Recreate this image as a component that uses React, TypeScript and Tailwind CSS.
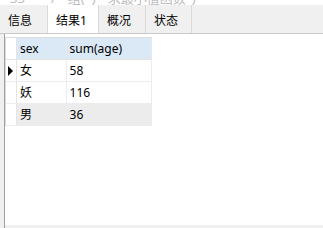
import React from 'react'

const font = { fontFamily: '"Noto Sans", "Noto Sans CJK SC", sans-serif' }

const tabs = [
  { label: '信息', w: 'w-[48px]', active: false },
  { label: '结果1', w: 'w-[51px]', active: true },
  { label: '概况', w: 'w-[47px]', active: false },
  { label: '状态', w: 'w-[46px]', active: false },
]

const rows = [
  { sex: '女', sum: '58', current: true, shade: false },
  { sex: '妖', sum: '116', current: false, shade: false },
  { sex: '男', sum: '36', current: false, shade: true },
]

export default function App() {
  return (
    <div className="w-[323px] h-[228px] bg-white overflow-hidden flex flex-col" style={font}>
      {/* 上方 SQL 编辑器, 只露出一点 */}
      <div className="h-[5px] overflow-hidden shrink-0">
        <div className="flex items-end h-[5px] text-[13px] leading-[16px] text-[#bdbdbd] whitespace-nowrap">
          <div className="-mb-[1px] flex">
            <span className="ml-[10px]">33</span>
            <span className="ml-[26px]">/</span>
            <span className="ml-[12px]">组(*)</span>
            <span className="ml-[12px]">求最小值函数</span>
            <span className="ml-[6px]">)</span>
          </div>
        </div>
      </div>

      {/* 标签页 */}
      <div className="flex h-[29px] shrink-0 bg-[#f0f0f0] border-b border-[#c9c9c9] text-[12px] text-black">
        {tabs.map((t) => (
          <div
            key={t.label}
            className={`${t.w} h-full flex items-center pl-[8px] pt-[3px] border-r border-[#d9d9d9] ${
              t.active ? 'bg-white -mb-px h-[29px]' : ''
            }`}
          >
            {t.label}
          </div>
        ))}
      </div>

      {/* 结果网格 */}
      <div className="flex flex-1 min-h-0">
        <div className="w-[4px] bg-[#f0f0f0]" />
        <div className="w-px bg-[#a0a0a0]" />
        <div className="flex-1 flex flex-col">
          <div className="flex-1 pt-[3px]">
            <div className="w-[147px] border-t border-l border-[#dcdcdc] text-[12px] text-black">
              <div className="flex h-[22px] border-b border-[#e4e4e4]">
                <div className="w-[11px] bg-white border-r border-[#e4e4e4]" />
                <div className="w-[50px] bg-[#dbe8f6] border-r border-[#e8e8e8] pl-[3px] flex items-center">sex</div>
                <div className="w-[86px] bg-[#dbe8f6] border-r border-[#e8e8e8] pl-[3px] flex items-center">sum(age)</div>
              </div>
              {rows.map((r) => (
                <div key={r.sex} className="flex h-[22px] border-b border-[#ececec]">
                  <div className="w-[11px] bg-white border-r border-[#e4e4e4] flex items-center justify-center">
                    {r.current && (
                      <div className="w-0 h-0 border-y-[5px] border-y-transparent border-l-[5px] border-l-black" />
                    )}
                  </div>
                  <div className={`w-[50px] pl-[3px] flex items-center border-r border-[#ececec] ${r.shade ? 'bg-[#ececec]' : 'bg-white'}`}>
                    {r.sex}
                  </div>
                  <div className={`w-[86px] pl-[3px] flex items-center ${r.shade ? 'bg-[#ececec]' : 'bg-white border-r border-[#ececec]'}`}>
                    {r.sum}
                  </div>
                </div>
              ))}
            </div>
          </div>
          <div className="h-[3px] bg-[#f0f0f0]" />
        </div>
      </div>
    </div>
  )
}
